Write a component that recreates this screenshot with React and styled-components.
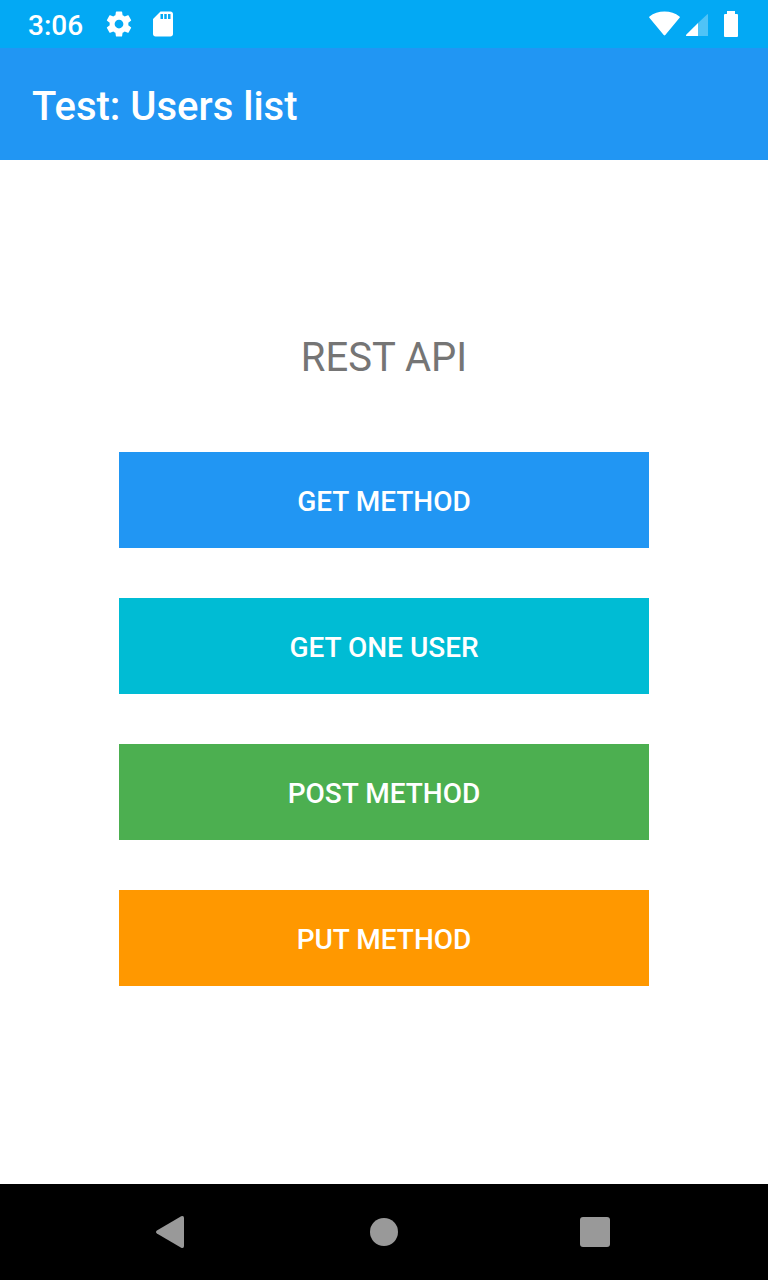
import React from "react";
import styled, { createGlobalStyle } from "styled-components";

const GlobalStyle = createGlobalStyle`
  *, *::before, *::after { box-sizing: border-box; }
  body {
    margin: 0;
    background: #ffffff;
    font-family: Roboto, "Liberation Sans", sans-serif;
  }
`;

const Screen = styled.div`
  display: flex;
  flex-direction: column;
  min-height: 100vh;
`;

const StatusBar = styled.div`
  display: flex;
  align-items: center;
  justify-content: space-between;
  height: 48px;
  padding: 0 28px;
  background: #03a9f4;
  color: #ffffff;
`;

const StatusGroup = styled.div`
  display: flex;
  align-items: center;
  gap: ${(p) => p.$gap}px;

  svg { display: block; flex: none; }
`;

const Clock = styled.time`
  padding: 3px 7px 0 0;
  font-size: 28px;
  font-weight: 500;
  line-height: 32px;
`;

const BatterySlot = styled.span`
  padding: 0 2px 0 10px;
`;

const AppBar = styled.header`
  display: flex;
  align-items: center;
  height: 112px;
  padding: 6px 32px 0;
  background: #2196f3;
  color: #ffffff;
`;

const AppTitle = styled.h1`
  margin: 0;
  font-size: 40px;
  font-weight: 500;
  line-height: 48px;
`;

const Content = styled.main`
  flex: 1;
  display: flex;
  flex-direction: column;
  align-items: center;
  padding: 174px 32px 48px;
`;

const Heading = styled.h2`
  margin: 0 0 70px;
  color: #757575;
  font-size: 40px;
  font-weight: 400;
  line-height: 48px;
`;

const Actions = styled.div`
  display: flex;
  flex-direction: column;
  gap: 50px;
  width: 100%;
  max-width: 530px;
`;

const MethodButton = styled.button`
  height: 96px;
  padding: 4px 16px 0;
  border: 0;
  background: ${(p) => p.$color};
  color: #ffffff;
  font-family: inherit;
  font-size: 28px;
  font-weight: 500;
  line-height: 32px;
  text-transform: uppercase;
  cursor: pointer;
`;

const NavBar = styled.nav`
  display: flex;
  justify-content: center;
  gap: 51px;
  height: 96px;
  background: #000000;
`;

const NavButton = styled.button`
  display: flex;
  align-items: center;
  justify-content: center;
  width: 160px;
  padding: 0;
  border: 0;
  background: transparent;
  color: #999999;
  cursor: pointer;
`;

const methods = [
  { label: "Get method", color: "#2196f3" },
  { label: "Get one user", color: "#00bcd4" },
  { label: "Post method", color: "#4caf50" },
  { label: "Put method", color: "#ff9800" },
];

const SettingsIcon = () => (
  <svg width="30" height="30" viewBox="0 0 24 24" fill="currentColor" aria-hidden="true">
    <path d="M19.43 12.98c.04-.32.07-.64.07-.98s-.03-.66-.07-.98l2.11-1.65c.19-.15.24-.42.12-.64l-2-3.46c-.12-.22-.39-.3-.61-.22l-2.49 1c-.52-.4-1.08-.73-1.69-.98l-.38-2.65C14.46 2.18 14.25 2 14 2h-4c-.25 0-.46.18-.49.42l-.38 2.65c-.61.25-1.17.59-1.69.98l-2.49-1c-.23-.09-.49 0-.61.22l-2 3.46c-.13.22-.07.49.12.64l2.11 1.65c-.04.32-.07.65-.07.98s.03.66.07.98l-2.11 1.65c-.19.15-.24.42-.12.64l2 3.46c.12.22.39.3.61.22l2.49-1c.52.4 1.08.73 1.69.98l.38 2.65c.03.24.24.42.49.42h4c.25 0 .46-.18.49-.42l.38-2.65c.61-.25 1.17-.59 1.69-.98l2.49 1c.23.09.49 0 .61-.22l2-3.46c.12-.22.07-.49-.12-.64l-2.11-1.65zM12 15.5c-1.93 0-3.5-1.57-3.5-3.5s1.57-3.5 3.5-3.5 3.5 1.57 3.5 3.5-1.57 3.5-3.5 3.5z" />
  </svg>
);

const SdCardIcon = () => (
  <svg width="30" height="30" viewBox="0 0 24 24" fill="currentColor" aria-hidden="true">
    <path d="M18 2h-8L4.02 8 4 20c0 1.1.9 2 2 2h12c1.1 0 2-.9 2-2V4c0-1.1-.9-2-2-2zm-6 6h-2V4h2v4zm3 0h-2V4h2v4zm3 0h-2V4h2v4z" />
  </svg>
);

const WifiIcon = () => (
  <svg width="32" height="30" viewBox="0 0 32 30" fill="currentColor" aria-hidden="true">
    <path d="M16.500 2.600C10.800 2.600 5.600 4.400 1.500 7.400Q0.800 8.100 1.400 8.800L15.700 26.100Q16.500 26.900 17.300 26.100L31.600 8.800Q32.200 8.100 31.500 7.400C27.400 4.400 22.200 2.600 16.500 2.600Z" />
  </svg>
);

const SignalIcon = () => (
  <svg width="22" height="30" viewBox="0 0 22 30" fill="currentColor" aria-hidden="true">
    <path d="M12 14V27H22V6Q22 4.600 21 5.400Z" opacity="0.3" />
    <path d="M12 14V27H0.800Q-0.600 27 0.400 25.600Z" />
  </svg>
);

const BatteryIcon = () => (
  <svg width="14" height="30" viewBox="0 0 14 30" fill="currentColor" aria-hidden="true">
    <path d="M3 2h8v3h2q1 0 1 1v21q0 1-1 1H1q-1 0-1-1V6q0-1 1-1h2z" />
  </svg>
);

const BackIcon = () => (
  <svg width="34" height="34" viewBox="0 0 34 34" fill="currentColor" aria-hidden="true">
    <path d="M0.900 15.500L25.200 1.300Q28 0.300 28 3V31Q28 33.700 25.200 32.700L0.900 18.500Q-0.900 17 0.900 15.500Z" />
  </svg>
);

const HomeIcon = () => (
  <svg width="34" height="34" viewBox="0 0 34 34" fill="currentColor" aria-hidden="true">
    <circle cx="17" cy="17" r="14" />
  </svg>
);

const RecentsIcon = () => (
  <svg width="34" height="34" viewBox="0 0 34 34" fill="currentColor" aria-hidden="true">
    <rect x="2" y="2" width="30" height="30" rx="3" />
  </svg>
);

export default function App() {
  return (
    <>
      <GlobalStyle />
      <Screen>
        <StatusBar>
          <StatusGroup $gap={14}>
            <Clock>3:06</Clock>
            <SettingsIcon />
            <SdCardIcon />
          </StatusGroup>
          <StatusGroup $gap={6}>
            <WifiIcon />
            <SignalIcon />
            <BatterySlot>
              <BatteryIcon />
            </BatterySlot>
          </StatusGroup>
        </StatusBar>
        <AppBar>
          <AppTitle>Test: Users list</AppTitle>
        </AppBar>
        <Content>
          <Heading>REST API</Heading>
          <Actions>
            {methods.map((m) => (
              <MethodButton key={m.label} type="button" $color={m.color}>
                {m.label}
              </MethodButton>
            ))}
          </Actions>
        </Content>
        <NavBar aria-label="System navigation">
          <NavButton type="button" aria-label="Back">
            <BackIcon />
          </NavButton>
          <NavButton type="button" aria-label="Home">
            <HomeIcon />
          </NavButton>
          <NavButton type="button" aria-label="Recent apps">
            <RecentsIcon />
          </NavButton>
        </NavBar>
      </Screen>
    </>
  );
}
